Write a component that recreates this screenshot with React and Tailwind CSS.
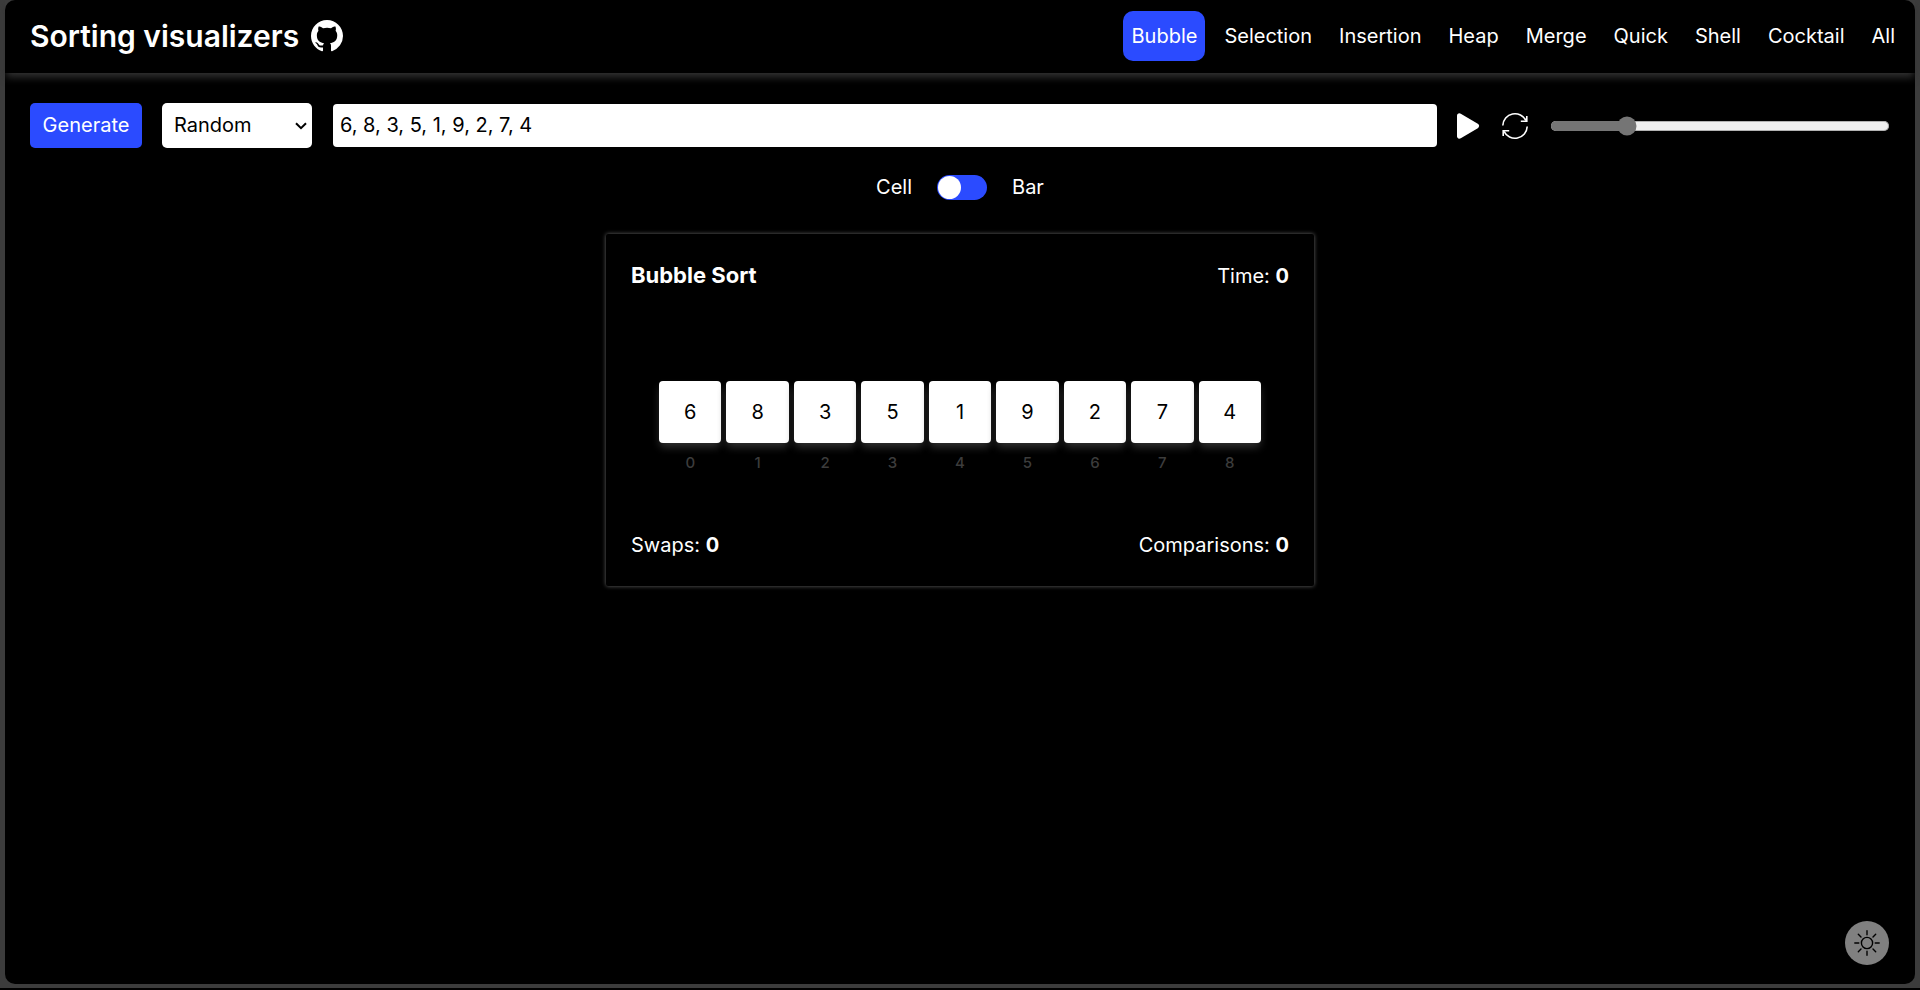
import { useState } from "react";
import { BsGithub } from "react-icons/bs";

const tabs = ["Bubble", "Selection", "Insertion", "Heap", "Merge", "Quick", "Shell", "Cocktail", "All"];

function PlayIcon() {
  return (
    <svg viewBox="0 0 26 28" className="h-7 w-[26px]" fill="white" stroke="white" strokeWidth="5" strokeLinejoin="round" aria-hidden="true">
      <path d="M4.500 3.800 21.500 14 4.500 24.200Z" />
    </svg>
  );
}

function RefreshIcon() {
  return (
    <svg viewBox="0 0 28 28" className="size-7" fill="none" stroke="white" strokeWidth="1.600" aria-hidden="true">
      <path d="M1.800 13.500a12.200 12.200 0 0 1 23.200-4.800M26.200 14.500a12.200 12.200 0 0 1-23.200 4.800" />
      <path d="M25.800 4v5.200h-6M2.200 24v-5.200h6" />
    </svg>
  );
}

function ChevronIcon() {
  return (
    <svg viewBox="0 0 12 8" className="pointer-events-none absolute top-[19px] right-[5px] h-2 w-3" fill="none" stroke="black" strokeWidth="2" aria-hidden="true">
      <path d="M1 1.200 6 6.200l5-5" />
    </svg>
  );
}

function SunIcon() {
  return (
    <svg viewBox="0 0 26 26" className="size-[26px]" fill="none" stroke="black" strokeWidth="1.400" strokeLinecap="round" aria-hidden="true">
      <circle cx="13" cy="13" r="5.600" />
      <path d="M13 .8v4M13 21.200v4M.8 13h4M21.200 13h4M4.300 4.300l2.700 2.700M19 19l2.700 2.700M4.300 21.700 7 19M19 7l2.700-2.700" />
    </svg>
  );
}

export default function App() {
  const [text, setText] = useState("6, 8, 3, 5, 1, 9, 2, 7, 4");
  const [speed, setSpeed] = useState(21);
  const [active, setActive] = useState("Bubble");
  const values = text.split(",").map((v) => v.trim()).filter(Boolean);

  return (
    <div className="flex min-h-screen flex-col border-b-2 border-black bg-[#3c3c3c] px-[5px] pb-1 font-['Inter',sans-serif] text-xl leading-[30px] text-white">
      <div className="flex flex-1 flex-col rounded-[10px] bg-black">
        <header className="flex h-[73px] items-center justify-between pr-3 pb-[2px] pl-[25px] shadow-[0_5px_8px_-1px_#333]">
          <div className="flex items-center gap-3">
            <h1 className="text-[30px] leading-10 font-semibold">Sorting visualizers</h1>
            <a href="#github" aria-label="GitHub">
              <BsGithub className="size-8" />
            </a>
          </div>
          <nav className="flex gap-[11px]">
            {tabs.map((tab) => (
              <a
                key={tab}
                href={"#" + tab.toLowerCase()}
                onClick={() => setActive(tab)}
                className={tab === active ? "rounded-[10px] bg-[#2b4bff] px-2 py-[10px]" : "rounded-[10px] px-2 py-[10px]"}
              >
                {tab}
              </a>
            ))}
          </nav>
        </header>

        <main className="flex flex-1 flex-col items-center">
          <section className="flex w-full items-center px-[25px] pt-[30px]">
            <button type="button" className="h-[45px] w-28 rounded-[5px] bg-[#2b4bff] pb-px">Generate</button>
            <div className="relative ml-5">
              <select aria-label="Array order" className="h-[45px] w-[150px] appearance-none rounded-[5px] bg-white px-3 pb-px text-black">
                <option>Random</option>
              </select>
              <ChevronIcon />
            </div>
            <input
              aria-label="Array values"
              value={text}
              onChange={(e) => setText(e.target.value)}
              className="ml-[21px] h-[43px] min-w-0 flex-1 rounded-[4px] bg-white px-[7px] pb-px text-black"
            />
            <button type="button" aria-label="Play" className="ml-[18px]"><PlayIcon /></button>
            <button type="button" aria-label="Reset" className="ml-5"><RefreshIcon /></button>
            <input
              type="range"
              aria-label="Speed"
              value={speed}
              onChange={(e) => setSpeed(Number(e.target.value))}
              className="ml-[17px] w-[272px] accent-[#757575] [zoom:1.25]"
            />
          </section>

          <label className="mt-6 flex items-center gap-[25px]">
            <span>Cell</span>
            <input
              type="checkbox"
              role="switch"
              aria-label="Show bars"
              className="h-[25px] w-[50px] appearance-none rounded-full bg-[#2b4bff] p-px before:block before:size-[23px] before:rounded-full before:bg-white checked:before:ml-[25px]"
            />
            <span>Bar</span>
          </label>

          <article className="mt-8 w-[708px] rounded-[2px] px-[25px] py-[26px] shadow-[0_0_4px_#666]">
            <div className="flex items-baseline justify-between">
              <h2 className="text-[22px] font-bold">Bubble Sort</h2>
              <p>Time: <b>0</b></p>
            </div>
            <ol className="mx-auto mt-[90px] mb-[55px] grid w-[602px] grid-cols-9 gap-[5px]">
              {values.map((v, i) => (
                <li key={i} className="text-center">
                  <div className="flex h-[62px] items-center justify-center rounded-[4px] bg-white text-black shadow-[0_5px_8px_-1px_#333]">{v}</div>
                  <div className="mt-2 text-[15px] leading-6 font-medium text-[#3c3c3c]">{i}</div>
                </li>
              ))}
            </ol>
            <div className="flex items-center justify-between">
              <p>Swaps: <b>0</b></p>
              <p>Comparisons: <b>0</b></p>
            </div>
          </article>
        </main>

        <footer className="flex justify-end px-[26px] pb-[19px]">
          <button type="button" aria-label="Toggle theme" className="flex size-11 items-center justify-center rounded-full bg-[#808080]">
            <SunIcon />
          </button>
        </footer>
      </div>
    </div>
  );
}
